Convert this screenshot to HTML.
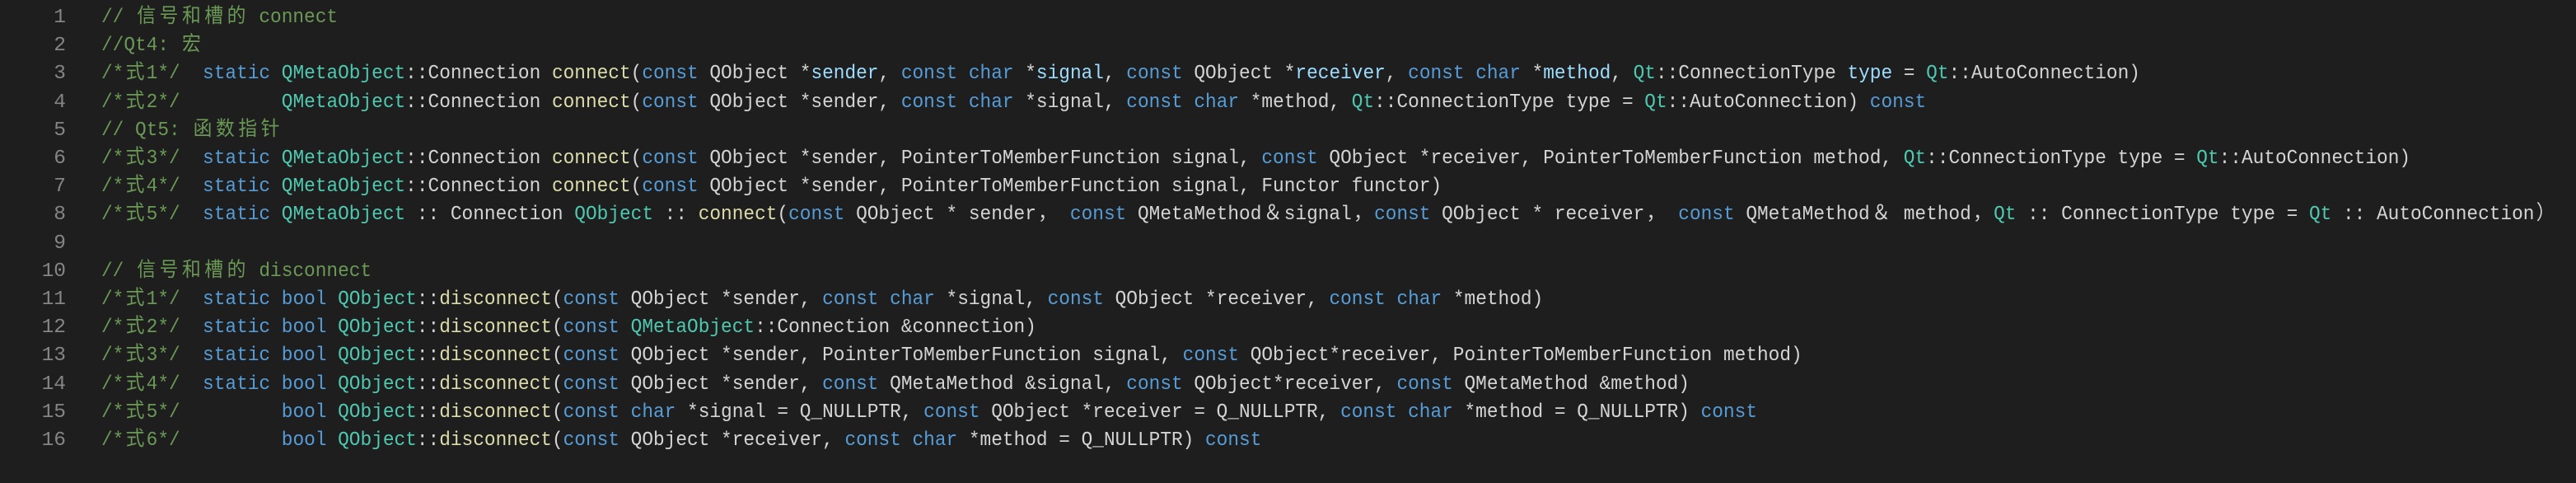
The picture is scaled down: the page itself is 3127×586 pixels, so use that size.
<!DOCTYPE html>
<html><head><meta charset="utf-8"><style>
html,body{margin:0;padding:0;background:#1e1e1e;width:3127px;height:555px;overflow:hidden}
.w{position:absolute;top:5px;left:0;font-family:"Liberation Mono","Noto Sans CJK SC",monospace;font-size:24.5px;line-height:34.2px;color:#d4d4d4;white-space:pre}
.n{position:absolute;left:0;width:80px;text-align:right;color:#858585}
.l{position:absolute;left:123px;transform:scaleX(0.93);transform-origin:0 0}
.c{color:#6a9955}.k{color:#569cd6}.t{color:#4ec9b0}.f{color:#dcdcaa}.v{color:#9cdcfe}
i{font-style:normal;display:inline-block;width:2ch;text-align:center}
</style></head><body><div class="w">
<div class="n" style="top:0">1</div><div class="l" style="top:0"><span class="c">// <i>信</i><i>号</i><i>和</i><i>槽</i><i>的</i> connect</span></div>
<div class="n" style="top:34.2px">2</div><div class="l" style="top:34.2px"><span class="c">//Qt4: <i>宏</i></span></div>
<div class="n" style="top:68.4px">3</div><div class="l" style="top:68.4px"><span class="c">/*<i>式</i>1*/</span>  <span class="k">static</span> <span class="t">QMetaObject</span>::Connection <span class="f">connect</span>(<span class="k">const</span> QObject *<span class="v">sender</span>, <span class="k">const</span> <span class="k">char</span> *<span class="v">signal</span>, <span class="k">const</span> QObject *<span class="v">receiver</span>, <span class="k">const</span> <span class="k">char</span> *<span class="v">method</span>, <span class="t">Qt</span>::ConnectionType <span class="v">type</span> = <span class="t">Qt</span>::AutoConnection)</div>
<div class="n" style="top:102.6px">4</div><div class="l" style="top:102.6px"><span class="c">/*<i>式</i>2*/</span>         <span class="t">QMetaObject</span>::Connection <span class="f">connect</span>(<span class="k">const</span> QObject *sender, <span class="k">const</span> <span class="k">char</span> *signal, <span class="k">const</span> <span class="k">char</span> *method, <span class="t">Qt</span>::ConnectionType type = <span class="t">Qt</span>::AutoConnection) <span class="k">const</span></div>
<div class="n" style="top:136.8px">5</div><div class="l" style="top:136.8px"><span class="c">// Qt5: <i>函</i><i>数</i><i>指</i><i>针</i></span></div>
<div class="n" style="top:171px">6</div><div class="l" style="top:171px"><span class="c">/*<i>式</i>3*/</span>  <span class="k">static</span> <span class="t">QMetaObject</span>::Connection <span class="f">connect</span>(<span class="k">const</span> QObject *sender, PointerToMemberFunction signal, <span class="k">const</span> QObject *receiver, PointerToMemberFunction method, <span class="t">Qt</span>::ConnectionType type = <span class="t">Qt</span>::AutoConnection)</div>
<div class="n" style="top:205.2px">7</div><div class="l" style="top:205.2px"><span class="c">/*<i>式</i>4*/</span>  <span class="k">static</span> <span class="t">QMetaObject</span>::Connection <span class="f">connect</span>(<span class="k">const</span> QObject *sender, PointerToMemberFunction signal, Functor functor)</div>
<div class="n" style="top:239.4px">8</div><div class="l" style="top:239.4px"><span class="c">/*<i>式</i>5*/</span>  <span class="k">static</span> <span class="t">QMetaObject</span> :: Connection <span class="t">QObject</span> :: <span class="f">connect</span>(<span class="k">const</span> QObject * sender<i>，</i> <span class="k">const</span> QMetaMethod<i>＆</i>signal<i>，</i><span class="k">const</span> QObject * receiver<i>，</i> <span class="k">const</span> QMetaMethod<i>＆</i> method<i>，</i><span class="t">Qt</span> :: ConnectionType type = <span class="t">Qt</span> :: AutoConnection<i>）</i></div>
<div class="n" style="top:273.6px">9</div>
<div class="n" style="top:307.8px">10</div><div class="l" style="top:307.8px"><span class="c">// <i>信</i><i>号</i><i>和</i><i>槽</i><i>的</i> disconnect</span></div>
<div class="n" style="top:342px">11</div><div class="l" style="top:342px"><span class="c">/*<i>式</i>1*/</span>  <span class="k">static</span> <span class="k">bool</span> <span class="t">QObject</span>::<span class="f">disconnect</span>(<span class="k">const</span> QObject *sender, <span class="k">const</span> <span class="k">char</span> *signal, <span class="k">const</span> QObject *receiver, <span class="k">const</span> <span class="k">char</span> *method)</div>
<div class="n" style="top:376.2px">12</div><div class="l" style="top:376.2px"><span class="c">/*<i>式</i>2*/</span>  <span class="k">static</span> <span class="k">bool</span> <span class="t">QObject</span>::<span class="f">disconnect</span>(<span class="k">const</span> <span class="t">QMetaObject</span>::Connection &amp;connection)</div>
<div class="n" style="top:410.4px">13</div><div class="l" style="top:410.4px"><span class="c">/*<i>式</i>3*/</span>  <span class="k">static</span> <span class="k">bool</span> <span class="t">QObject</span>::<span class="f">disconnect</span>(<span class="k">const</span> QObject *sender, PointerToMemberFunction signal, <span class="k">const</span> QObject*receiver, PointerToMemberFunction method)</div>
<div class="n" style="top:444.6px">14</div><div class="l" style="top:444.6px"><span class="c">/*<i>式</i>4*/</span>  <span class="k">static</span> <span class="k">bool</span> <span class="t">QObject</span>::<span class="f">disconnect</span>(<span class="k">const</span> QObject *sender, <span class="k">const</span> QMetaMethod &amp;signal, <span class="k">const</span> QObject*receiver, <span class="k">const</span> QMetaMethod &amp;method)</div>
<div class="n" style="top:478.8px">15</div><div class="l" style="top:478.8px"><span class="c">/*<i>式</i>5*/</span>         <span class="k">bool</span> <span class="t">QObject</span>::<span class="f">disconnect</span>(<span class="k">const</span> <span class="k">char</span> *signal = Q_NULLPTR, <span class="k">const</span> QObject *receiver = Q_NULLPTR, <span class="k">const</span> <span class="k">char</span> *method = Q_NULLPTR) <span class="k">const</span></div>
<div class="n" style="top:513px">16</div><div class="l" style="top:513px"><span class="c">/*<i>式</i>6*/</span>         <span class="k">bool</span> <span class="t">QObject</span>::<span class="f">disconnect</span>(<span class="k">const</span> QObject *receiver, <span class="k">const</span> <span class="k">char</span> *method = Q_NULLPTR) <span class="k">const</span></div>
</div></body></html>
